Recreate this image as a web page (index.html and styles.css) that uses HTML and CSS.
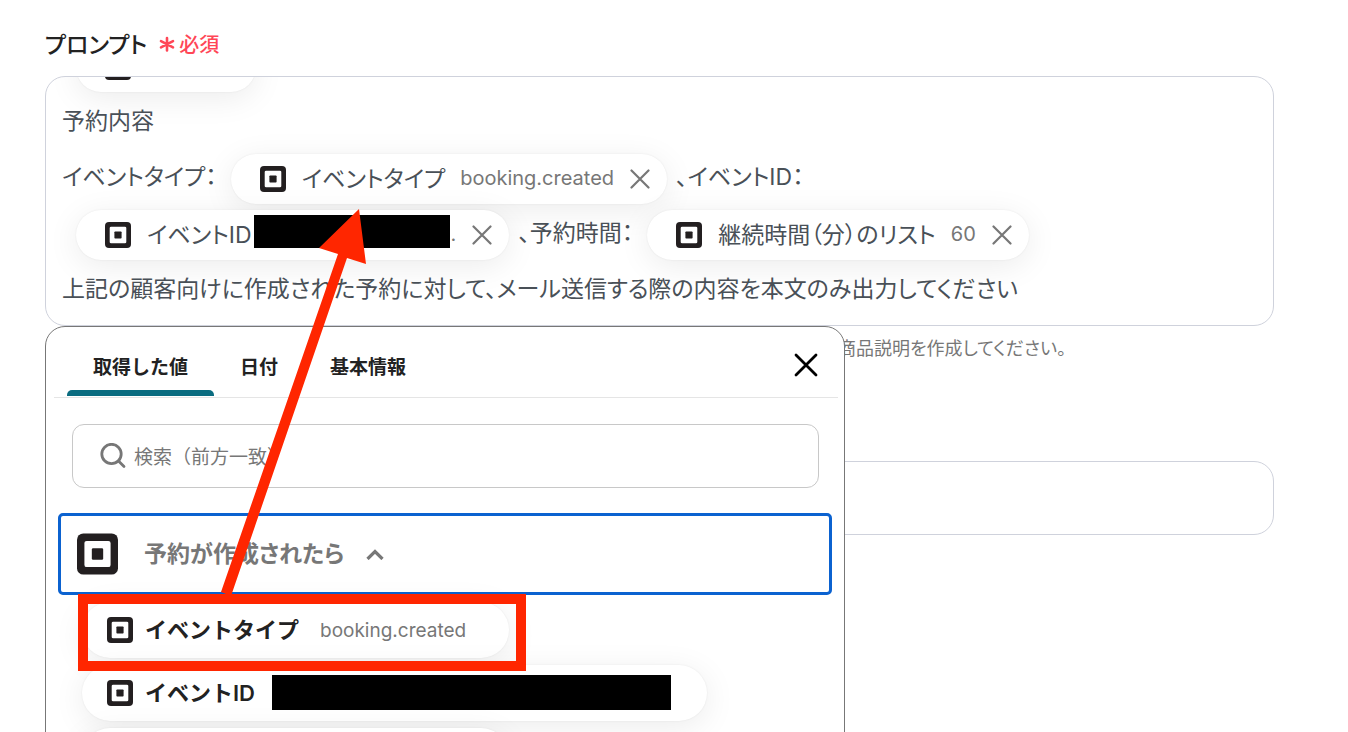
FILE: index.html
```
<!DOCTYPE html>
<html lang="ja">
  <head>
    <meta charset="utf-8">
    <meta name="viewport" content="width=device-width">
    <title>プロンプト</title>
    <link rel="stylesheet" href="styles.css">
  </head>

  <body>
    <!-- Square logo, shared by every chip -->
    <svg class="defs" width="0" height="0" aria-hidden="true">
      <symbol id="logo" viewBox="0 0 26 26">
        <rect width="26" height="26" rx="4" fill="#231f20"/>
        <rect x="4.7" y="4.7" width="16.6" height="16.6" rx="1.4" fill="#fff"/>
        <rect x="9.4" y="9.4" width="7.2" height="7.2" rx="0.8" fill="#231f20"/>
      </symbol>
      <symbol id="cross" viewBox="0 0 20 20">
        <path d="M1.5 1.5l17 17M18.5 1.5l-17 17" fill="none" stroke="currentColor" stroke-width="2.2" stroke-linecap="round"/>
      </symbol>
    </svg>

    <main class="page">
      <div class="label">
        <span id="prompt-label">プロンプト</span>
        <span class="required">
          <svg class="star" viewBox="0 0 16 18"><path d="M8 4v12.4M2 7.1l12 6.2M14 7.1L2 13.3" fill="none" stroke="currentColor" stroke-width="2.6" stroke-linecap="round"/></svg>
          必須
        </span>
      </div>

      <div class="field">
        <div class="editor" role="textbox" aria-labelledby="prompt-label">
          <div class="lines">
            <div class="line">
              <span class="chip chip-short"><svg class="logo"><use href="#logo"/></svg></span>
            </div>
            <div class="line">予約内容</div>
            <div class="line">
              イベントタイプ：
              <span class="chip">
                <svg class="logo"><use href="#logo"/></svg>
                <span class="chip-name">イベントタイプ</span>
                <span class="chip-value">booking.created</span>
                <button class="remove" type="button" aria-label="削除"><svg><use href="#cross"/></svg></button>
              </span>
              、イベントID：
            </div>
            <div class="line">
              <span class="chip">
                <svg class="logo"><use href="#logo"/></svg>
                <span class="chip-name">イベントID</span>
                <span class="masked"></span>
                <span class="chip-value chip-dot">.</span>
                <button class="remove" type="button" aria-label="削除"><svg><use href="#cross"/></svg></button>
              </span>
              、予約時間：
              <span class="chip">
                <svg class="logo"><use href="#logo"/></svg>
                <span class="chip-name">継続時間（分）のリスト</span>
                <span class="chip-value">60</span>
                <button class="remove" type="button" aria-label="削除"><svg><use href="#cross"/></svg></button>
              </span>
            </div>
            <div class="line">上記の顧客向けに作成された予約に対して、メール送信する際の内容を本文のみ出力してください</div>
          </div>
        </div>

        <section class="picker">
          <div class="picker-head">
            <div class="tabs" role="tablist">
              <button class="tab active" type="button" role="tab" aria-selected="true">取得した値</button>
              <button class="tab" type="button" role="tab">日付</button>
              <button class="tab" type="button" role="tab">基本情報</button>
            </div>
            <button class="close" type="button" aria-label="閉じる">
              <svg viewBox="0 0 24 24"><path d="M2 2l20 20M22 2L2 22" fill="none" stroke="currentColor" stroke-width="2.8" stroke-linecap="round"/></svg>
            </button>
          </div>

          <label class="search">
            <svg viewBox="0 0 26 26"><circle cx="11.5" cy="11" r="9.7" fill="none" stroke="currentColor" stroke-width="2.8"/><path d="M18.5 18l5.5 5.5" stroke="currentColor" stroke-width="2.8" stroke-linecap="round"/></svg>
            <input type="text" placeholder="検索（前方一致）" aria-label="検索（前方一致）">
          </label>

          <button class="group" type="button" aria-expanded="true">
            <svg class="logo-large"><use href="#logo"/></svg>
            <span class="group-name">予約が作成されたら</span>
            <svg class="chevron" viewBox="0 0 18 12"><path d="M1.5 11l7.5-7.5 7.5 7.5" fill="none" stroke="currentColor" stroke-width="3.2"/></svg>
          </button>

          <ul class="items">
            <li>
              <button class="item" type="button">
                <svg class="logo"><use href="#logo"/></svg>
                <span class="item-name">イベントタイプ</span>
                <span class="item-value">booking.created</span>
              </button>
            </li>
            <li>
              <button class="item item-masked" type="button">
                <svg class="logo"><use href="#logo"/></svg>
                <span class="item-name">イベントID</span>
                <span class="masked masked-wide"></span>
              </button>
            </li>
            <li>
              <button class="item item-next" type="button" aria-label="次の項目"></button>
            </li>
          </ul>
        </section>
      </div>

      <p class="help">商品説明を作成してください。</p>
      <input class="text-field" type="text" aria-label="値">

      <!-- Drag hint: from the list item up to the chip -->
      <svg class="hint" aria-hidden="true">
        <rect x="83" y="599" width="438" height="67" fill="none" stroke="#ff2600" stroke-width="10"/>
        <path d="M221 592L338 254L319 248L359 209L366 264L347 258L231 596z" fill="#ff2600"/>
      </svg>
    </main>
  </body>
</html>
```
FILE: styles.css
```
* {
  box-sizing: border-box;
}

body {
  margin: 0;
  background-color: #fff;
  color: #222;
  font-family: Inter, "Noto Sans CJK JP", sans-serif;
}

button {
  border: none;
  padding: 0;
  background: none;
  color: inherit;
  font: inherit;
  cursor: pointer;
}

.defs {
  position: absolute;
}

.page {
  position: relative;
  height: 100vh;
  overflow: hidden;
  padding: 26px 74px 0 45px;
}

.label {
  display: flex;
  align-items: center;
  gap: 12px;
  height: 34px;
  margin-bottom: 16px;
  font-size: 23px;
  font-weight: 500;
  font-feature-settings: "palt";
}

.required {
  display: flex;
  align-items: center;
  gap: 4px;
  color: #ff4757;
  font-size: 20px;
}

.star {
  width: 16px;
  height: 18px;
}

.field {
  position: relative;
}

.editor {
  height: 250px;
  overflow: hidden;
  border: 1px solid #cfd2dc;
  border-radius: 20px;
  padding: 0 16px;
  color: #495057;
  font-size: 23px;
  font-feature-settings: "palt";
}

.lines {
  margin-top: -40px;
}

.line {
  display: flex;
  align-items: center;
  height: 56px;
  padding-bottom: 4px;
  white-space: nowrap;
}

.chip {
  display: flex;
  align-items: center;
  height: 50px;
  margin: 8px 9px 0 14px;
  padding: 0 17px 0 29px;
  border-radius: 25px;
  background-color: #fff;
  box-shadow: 0 6px 32px rgba(0, 0, 0, 0.08), 0 0 2px rgba(0, 0, 0, 0.08);
}

.chip-short {
  width: 180px;
}

.logo {
  flex: none;
  width: 26px;
  height: 26px;
}

.chip-name {
  margin-left: 16px;
  padding-bottom: 4px;
}

.chip-value {
  margin-left: 15px;
  padding-bottom: 2px;
  color: #777;
  font-size: 20px;
}

.chip-dot {
  margin-left: 1px;
}

.remove {
  display: flex;
  margin-left: 16px;
  color: #777;
}

.remove svg {
  width: 20px;
  height: 20px;
}

.masked {
  align-self: flex-start;
  width: 196px;
  height: 33px;
  margin-top: 5px;
  margin-left: 2px;
  background-color: #000;
}

.picker {
  position: absolute;
  top: 100%;
  left: 0;
  width: 100%;
  max-width: 800px;
  height: 480px;
  border: 1px solid #777;
  border-radius: 20px;
  padding: 0 12px;
  background-color: #fff;
}

.picker-head {
  display: flex;
  justify-content: space-between;
  align-items: flex-end;
  height: 71px;
  margin: 0 -6px 0 -4px;
  padding: 0 20px 1px 13px;
  border-bottom: 1px solid #e5e5e5;
}

.tabs {
  display: flex;
}

.tab {
  position: relative;
  height: 56px;
  padding: 0 26px 5px;
  font-size: 19px;
  font-weight: 700;
}

.active::after {
  content: "";
  position: absolute;
  right: 0;
  bottom: 0;
  left: 0;
  height: 6px;
  border-radius: 5px 5px 0 0;
  background-color: #0a6c80;
}

.close {
  display: flex;
  margin-bottom: 19px;
  color: #000;
}

.close svg {
  width: 24px;
  height: 24px;
}

.search {
  display: flex;
  align-items: center;
  gap: 8px;
  height: 64px;
  margin: 26px 13px 25px 14px;
  padding: 0 27px;
  border: 1px solid #c8c8c8;
  border-radius: 12px;
  color: #777;
}

.search svg {
  flex: none;
  width: 26px;
  height: 26px;
}

.search input {
  flex: 1;
  border: none;
  padding: 2px 0 0;
  outline: none;
  background: none;
  font: inherit;
  font-size: 19px;
}

.search input::placeholder {
  color: #777;
}

.group {
  display: flex;
  align-items: center;
  width: 100%;
  height: 82px;
  padding: 0 16px;
  border: 3px solid #0b62d0;
  border-radius: 5px;
  color: #777;
}

.group-name {
  padding-bottom: 4px;
  font-size: 23px;
  font-weight: 700;
  font-feature-settings: "palt";
}

.logo-large {
  width: 41px;
  height: 42px;
  margin-right: 26px;
}

.chevron {
  width: 18px;
  height: 12px;
  margin-left: 22px;
}

.items {
  display: flex;
  flex-direction: column;
  gap: 7px;
  margin: 7px 0 0;
  padding: 0 24px;
  list-style: none;
}

.item {
  display: flex;
  align-items: center;
  height: 56px;
  padding: 0 43px 0 25px;
  border-radius: 28px;
  background-color: #fff;
  box-shadow: 0 6px 32px rgba(0, 0, 0, 0.08), 0 0 2px rgba(0, 0, 0, 0.08);
}

.item-name {
  margin-left: 12px;
  padding-bottom: 4px;
  font-size: 22px;
  font-weight: 600;
}

.item-value {
  margin-left: 21px;
  color: #777;
  font-size: 19px;
}

.item-masked {
  padding-right: 36px;
}

.masked-wide {
  width: 399px;
  height: 35px;
  margin-top: 10px;
  margin-left: 17px;
}

.item-next {
  width: 427px;
}

.help {
  margin: 8px 0 0;
  padding-left: 793px;
  color: #777;
  font-size: 18px;
  line-height: 30px;
  white-space: nowrap;
  font-feature-settings: "palt";
}

.text-field {
  display: block;
  width: 100%;
  height: 74px;
  margin-top: 97px;
  padding: 0 17px;
  border: 1px solid #cfd2dc;
  border-radius: 20px;
  background-color: #fff;
  font: inherit;
}

.hint {
  position: absolute;
  top: 0;
  left: 0;
  width: 100%;
  height: 100%;
  pointer-events: none;
}
```
